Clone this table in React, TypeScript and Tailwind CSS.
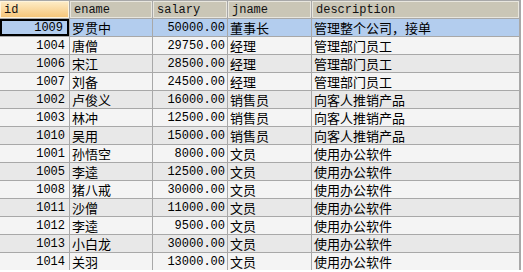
import React from "react";

const rows: [string, string, string, string, string][] = [
  ["1009", "罗贯中", "50000.00", "董事长", "管理整个公司，接单"],
  ["1004", "唐僧", "29750.00", "经理", "管理部门员工"],
  ["1006", "宋江", "28500.00", "经理", "管理部门员工"],
  ["1007", "刘备", "24500.00", "经理", "管理部门员工"],
  ["1002", "卢俊义", "16000.00", "销售员", "向客人推销产品"],
  ["1003", "林冲", "12500.00", "销售员", "向客人推销产品"],
  ["1010", "吴用", "15000.00", "销售员", "向客人推销产品"],
  ["1001", "孙悟空", "8000.00", "文员", "使用办公软件"],
  ["1005", "李逵", "12500.00", "文员", "使用办公软件"],
  ["1008", "猪八戒", "30000.00", "文员", "使用办公软件"],
  ["1011", "沙僧", "11000.00", "文员", "使用办公软件"],
  ["1012", "李逵", "9500.00", "文员", "使用办公软件"],
  ["1013", "小白龙", "30000.00", "文员", "使用办公软件"],
  ["1014", "关羽", "13000.00", "文员", "使用办公软件"],
];

const font = {
  fontFamily: '"Liberation Mono", "Noto Sans CJK SC", monospace',
};
const cjk = {
  fontFamily: '"Noto Sans CJK SC", sans-serif',
};

export default function App() {
  const cols = "grid-cols-[69px_82px_74px_83px_207px]";
  return (
    <div className="w-[523px] h-[272px] bg-white overflow-hidden text-[12px] text-black leading-none" style={font}>
      <div className="w-[521px] bg-[#a8a8a8] pt-px pr-px">
        <div className={`grid ${cols} gap-x-px`}>
          <div className="h-[17px] flex items-center px-[3px] bg-gradient-to-b from-[#fdebc4] to-[#f6c679] border border-[#fff4dc] text-[#111]">id</div>
          {["ename", "salary", "jname", "description"].map((h) => (
            <div key={h} className="h-[17px] flex items-center px-[3px] bg-[#cac6b6] border border-[#e8e6de] text-[#111]">
              {h}
            </div>
          ))}
        </div>
        {rows.map((r, i) => {
          const sel = i === 0;
          const bg = sel ? "bg-[#b3cdee]" : i % 2 === 1 ? "bg-[#f4f4f4]" : "bg-[#e8e8e8]";
          return (
            <div key={i} className={`grid ${cols} gap-x-px mt-px`}>
              <div className={`h-[17px] flex items-center justify-end pr-[4px] ${bg} ${sel ? "border-2 border-black pr-[2px]" : ""}`}>{r[0]}</div>
              <div className={`h-[17px] flex items-center pl-[2px] text-[13px] ${bg}`} style={cjk}>{r[1]}</div>
              <div className={`h-[17px] flex items-center justify-end pr-[2px] ${bg}`}>{r[2]}</div>
              <div className={`h-[17px] flex items-center pl-[2px] text-[13px] ${bg}`} style={cjk}>{r[3]}</div>
              <div className={`h-[17px] flex items-center pl-[2px] text-[13px] ${bg}`} style={cjk}>{r[4]}</div>
            </div>
          );
        })}
      </div>
    </div>
  );
}
